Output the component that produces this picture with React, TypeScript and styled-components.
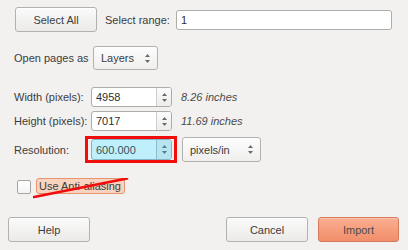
import React from "react";
import styled, { createGlobalStyle, css } from "styled-components";

const Global = createGlobalStyle`
  html, body { margin: 0; padding: 0; background: #f2f1f0; }
  body { font-family: "Liberation Sans", Arial, sans-serif; font-size: 11px; color: #3c3c3c; }
  * { box-sizing: border-box; }
`;

const Page = styled.div`
  width: 408px;
  height: 250px;
  padding: 7px 9px 8px 8px;
  display: flex;
  flex-direction: column;
  background: #f2f1f0;
`;

const Row = styled.div<{ $mt?: number; $pl?: number; $pr?: number; $gap?: number; $h?: number }>`
  display: flex;
  align-items: center;
  margin-top: ${(p) => p.$mt ?? 0}px;
  padding-left: ${(p) => p.$pl ?? 0}px;
  padding-right: ${(p) => p.$pr ?? 0}px;
  gap: ${(p) => p.$gap ?? 0}px;
  ${(p) => p.$h && css`height: ${p.$h}px;`}
`;

const Button = styled.button<{ $w: number; $primary?: boolean; $ml?: number }>`
  width: ${(p) => p.$w}px;
  height: 25px;
  margin-left: ${(p) => p.$ml ?? 0}px;
  border-radius: 3px;
  font-family: inherit;
  font-size: 11px;
  color: #3c3c3c;
  padding: 0;
  border: 1px solid #b3b1ae;
  background: linear-gradient(#fbfbfb, #ebeae8);
  box-shadow: inset 0 1px 0 #fff;
  ${(p) =>
    p.$primary &&
    css`
      border-color: #d47a58;
      background: linear-gradient(#fbae91, #f18e6a);
      box-shadow: inset 0 1px 0 #fcc3ad;
      color: #4f4a4a;
    `}
`;

const Label = styled.span<{ $w?: number; $italic?: boolean; $ml?: number }>`
  ${(p) => p.$w && css`width: ${p.$w}px; flex: none;`}
  margin-left: ${(p) => p.$ml ?? 0}px;
  white-space: nowrap;
  ${(p) => p.$italic && css`font-style: italic; color: #4a4a4a;`}
`;

const TextInput = styled.div`
  flex: 1;
  height: 20px;
  border: 1px solid #aeaca9;
  border-radius: 3px;
  background: #fff;
  display: flex;
  align-items: center;
  padding-left: 4px;
  color: #2f2f2f;
`;

const Select = styled.div<{ $w: number; $h: number; $ml?: number }>`
  width: ${(p) => p.$w}px;
  height: ${(p) => p.$h}px;
  margin-left: ${(p) => p.$ml ?? 0}px;
  border: 1px solid #b3b1ae;
  border-radius: 3px;
  background: linear-gradient(#fdfdfd, #f0efee);
  display: flex;
  align-items: center;
  justify-content: space-between;
  padding: 0 6px 0 7px;
`;

const Spin = styled.div<{ $active?: boolean }>`
  position: relative;
  width: 81px;
  height: ${(p) => (p.$active ? 21 : 20)}px;
  border: 1px solid ${(p) => (p.$active ? "#7fb3c6" : "#aeaca9")};
  border-radius: 3px;
  background: ${(p) => (p.$active ? "#c0effc" : "#fff")};
  display: flex;
  align-items: stretch;
  flex: none;
  ${(p) =>
    p.$active &&
    css`
      &::after {
        content: "";
        position: absolute;
        left: -7px;
        right: -6px;
        top: -4px;
        bottom: -4px;
        border: 3px solid #f20d0d;
        pointer-events: none;
      }
    `}
`;

const SpinValue = styled.div<{ $active?: boolean }>`
  flex: 1;
  display: flex;
  align-items: center;
  padding-left: 4px;
  color: ${(p) => (p.$active ? "#33545e" : "#2f2f2f")};
`;

const SpinButtons = styled.div<{ $active?: boolean }>`
  width: 15px;
  border-left: 1px solid ${(p) => (p.$active ? "#8cbccc" : "#d0cecb")};
  background: ${(p) => (p.$active ? "#b6e4f1" : "linear-gradient(#fbfbfb, #eeedec)")};
  border-radius: 0 2px 2px 0;
  display: flex;
  align-items: center;
  justify-content: center;
`;

const Arrows = ({ color = "#6a6a6a" }: { color?: string }) => (
  <svg width="7" height="11" viewBox="0 0 7 11">
    <path d="M3.5 1 L6 4 L1 4 Z" fill={color} />
    <path d="M3.5 10 L6 7 L1 7 Z" fill={color} />
  </svg>
);

const Form = styled.div`
  display: flex;
  flex-direction: column;
  margin-top: 17px;
  padding-left: 6px;
`;

const CheckRow = styled.div`
  position: relative;
  display: flex;
  align-items: center;
  margin-top: 16px;
  padding-left: 9px;
  gap: 5px;
  height: 16px;
`;

const Checkbox = styled.span`
  width: 14px;
  height: 14px;
  margin-top: 2px;
  border: 1px solid #a8a6a3;
  border-radius: 2px;
  background: linear-gradient(#fff, #f3f3f3);
  flex: none;
`;

const Highlight = styled.span`
  height: 16px;
  padding: 0 3px 0 2px;
  border: 1px solid #e7946f;
  border-radius: 3px;
  background: #f8d3c0;
  display: flex;
  align-items: center;
  white-space: nowrap;
`;

const Strike = styled.svg`
  position: absolute;
  left: 25px;
  top: 0;
  pointer-events: none;
`;

const ButtonRow = styled.div`
  display: flex;
  align-items: center;
  justify-content: space-between;
  margin-top: 23px;
`;

const ButtonGroup = styled.div`
  display: flex;
  gap: 10px;
`;

export default function App() {
  return (
    <>
      <Global />
      <Page>
        <Row $pl={7} $pr={7} $gap={8}>
          <Button $w={82}>Select All</Button>
          <Label $w={63}>Select range:</Label>
          <TextInput>1</TextInput>
        </Row>
        <Row $mt={14} $pl={6} $h={24}>
          <Label $w={79}>Open pages as</Label>
          <Select $w={65} $h={24}>
            Layers
            <Arrows />
          </Select>
        </Row>
        <Form>
          <Row $h={20}>
            <Label $w={77}>Width (pixels):</Label>
            <Spin>
              <SpinValue>4958</SpinValue>
              <SpinButtons>
                <Arrows />
              </SpinButtons>
            </Spin>
            <Label $italic $ml={9}>8.26 inches</Label>
          </Row>
          <Row $mt={4} $h={20}>
            <Label $w={77}>Height (pixels):</Label>
            <Spin>
              <SpinValue>7017</SpinValue>
              <SpinButtons>
                <Arrows />
              </SpinButtons>
            </Spin>
            <Label $italic $ml={9}>11.69 inches</Label>
          </Row>
          <Row $mt={6} $h={25}>
            <Label $w={77}>Resolution:</Label>
            <Spin $active>
              <SpinValue $active>600.000</SpinValue>
              <SpinButtons $active>
                <Arrows color="#5a7d88" />
              </SpinButtons>
            </Spin>
            <Select $w={79} $h={25} $ml={10}>
              pixels/in
              <Arrows />
            </Select>
          </Row>
        </Form>
        <CheckRow>
          <Checkbox />
          <Highlight>Use Anti-aliasing</Highlight>
          <Strike width="100" height="22" viewBox="0 0 100 22">
            <path d="M1 19 L94 0.5" stroke="#f20d0d" strokeWidth="2.6" strokeLinecap="round" />
          </Strike>
        </CheckRow>
        <ButtonRow>
          <Button $w={82}>Help</Button>
          <ButtonGroup>
            <Button $w={82}>Cancel</Button>
            <Button $w={81} $primary>Import</Button>
          </ButtonGroup>
        </ButtonRow>
      </Page>
    </>
  );
}
